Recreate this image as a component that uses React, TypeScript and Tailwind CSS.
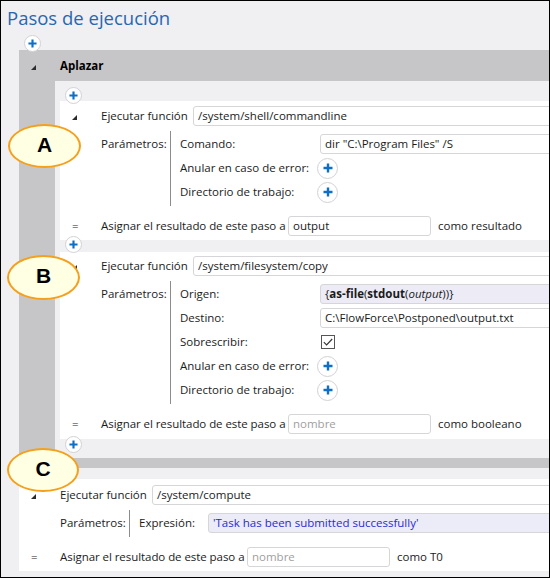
import React from 'react';

const ui = "font-['Open_Sans','Noto_Sans',sans-serif]";

function PlusButton({ big = false }: { big?: boolean }) {
  return (
    <div
      className={`${big ? 'w-[21px] h-[21px]' : 'w-[17px] h-[17px]'} rounded-full border border-[#d2d2d6] bg-white flex items-center justify-center`}
    >
      <svg width={big ? 10 : 9} height={big ? 10 : 9} viewBox="0 0 10 10">
        <path d="M5 0.5v9M0.5 5h9" stroke="#0f6fc6" strokeWidth="2.4" />
      </svg>
    </div>
  );
}

function Expander() {
  return (
    <svg width="5" height="5" viewBox="0 0 5 5">
      <path d="M5 0V5H0Z" fill="#2b2b2b" />
    </svg>
  );
}

function Field({
  children,
  className = '',
}: {
  children: React.ReactNode;
  className?: string;
}) {
  return (
    <div
      className={`h-[20px] border border-[#d6d6d8] rounded-[3px] pl-[4px] flex items-center whitespace-nowrap overflow-hidden ${className}`}
    >
      {children}
    </div>
  );
}

interface Param {
  label: string;
  kind: 'field' | 'plus' | 'check';
  value?: React.ReactNode;
  fieldClass?: string;
}

interface StepProps {
  fn: string;
  params: Param[];
  labelWidth: string;
  result: string;
  placeholder?: boolean;
  as: string;
  className?: string;
}

function Step({ fn, params, labelWidth, result, placeholder, as, className = '' }: StepProps) {
  return (
    <div className={`bg-white overflow-hidden ${className}`}>
      {/* Ejecutar función */}
      <div className="flex items-center h-[20px]">
        <div className="w-[41px] pl-[12px] pt-[3px] flex">
          <Expander />
        </div>
        <span className="w-[92px] whitespace-nowrap">Ejecutar función</span>
        <Field className="flex-1 -mr-[6px]">{fn}</Field>
      </div>

      {/* Parámetros */}
      <div className="flex ml-[41px] mt-[5px]">
        <div className="w-[69px] pt-[1px]">
          <div className="h-[24px] flex items-center">Parámetros:</div>
        </div>
        <div className="flex-1 border-l border-[#8c8c8c] pl-[9px] pt-[1px] pb-[2px]">
          {params.map((p) => (
            <div key={p.label} className="h-[24px] flex items-center">
              <span className={`${labelWidth} shrink-0 whitespace-nowrap`}>{p.label}</span>
              {p.kind === 'field' && (
                <Field className={`flex-1 -mr-[6px] ${p.fieldClass ?? ''}`}>{p.value}</Field>
              )}
              {p.kind === 'plus' && (
                <div className="-ml-[3px]">
                  <PlusButton big />
                </div>
              )}
              {p.kind === 'check' && (
                <div className="ml-[1px] w-[14px] h-[14px] border border-[#555] bg-white flex items-center justify-center">
                  <svg width="10" height="8" viewBox="0 0 10 8">
                    <path d="M0.8 4.2L3.6 7L9.2 1" stroke="#333" strokeWidth="1.1" fill="none" />
                  </svg>
                </div>
              )}
            </div>
          ))}
        </div>
      </div>

      {/* Asignar resultado */}
      <div className="flex items-center h-[20px] mt-[10px]">
        <span className="w-[41px] pl-[12px]">=</span>
        <span className="w-[187px] whitespace-nowrap tracking-[-0.06px]">
          Asignar el resultado de este paso a
        </span>
        <Field className={`w-[143px] ${placeholder ? 'text-[#a0a0a0]' : ''}`}>{result}</Field>
        <span className="ml-[7px]">{as}</span>
      </div>
    </div>
  );
}

function Oval({ letter, className }: { letter: string; className: string }) {
  return (
    <div
      className={`absolute rounded-[50%] border-[2.5px] border-[#f4a01c] bg-[#ffffe3] flex items-center justify-center font-['Liberation_Sans',Arial,sans-serif] font-bold text-[21px] text-black leading-none pb-[4px] ${className}`}
    >
      {letter}
    </div>
  );
}

export default function App() {
  return (
    <div
      className={`relative w-[550px] h-[578px] border border-black bg-[#f0f0f3] overflow-hidden text-[11.5px] text-[#1b1b1b] ${ui}`}
    >
      {/* Header */}
      <div className="relative h-[49px]">
        <div className="pl-[6px] pt-[3px] text-[18.5px] leading-[28px] text-[#2767b0]">
          Pasos de ejecución
        </div>
        <div className="absolute left-[23px] top-[34px] z-10">
          <PlusButton />
        </div>
      </div>

      {/* Aplazar */}
      <div className="ml-[18px] bg-[#c6c6c8] pb-[10px]">
        <div className="h-[31px] flex items-center">
          <div className="w-[41px] pl-[12px] pt-[3px] flex">
            <Expander />
          </div>
          <span className="font-bold text-black">Aplazar</span>
        </div>
        <div className="ml-[36px] bg-[#f0f0f3] pl-[5px]">
          <div className="relative h-[20px]">
            <div className="absolute left-[5px] top-[6px] z-10">
              <PlusButton />
            </div>
          </div>
          <Step
            className="h-[139px] pt-[5px]"
            fn="/system/shell/commandline"
            labelWidth="w-[140px]"
            params={[
              { label: 'Comando:', kind: 'field', value: 'dir "C:\\Program Files" /S' },
              { label: 'Anular en caso de error:', kind: 'plus' },
              { label: 'Directorio de trabajo:', kind: 'plus' },
            ]}
            result="output"
            as="como resultado"
          />
          <div className="relative h-[12px]">
            <div className="absolute left-[5px] -top-[4px] z-10">
              <PlusButton />
            </div>
          </div>
          <Step
            className="h-[187px] pt-[4px]"
            fn="/system/filesystem/copy"
            labelWidth="w-[140px]"
            params={[
              {
                label: 'Origen:',
                kind: 'field',
                fieldClass: 'bg-[#ecebf6]',
                value: (
                  <span>
                    {'{'}
                    <b>as-file</b>(<b>stdout</b>(<i>output</i>)){'}'}
                  </span>
                ),
              },
              { label: 'Destino:', kind: 'field', value: 'C:\\FlowForce\\Postponed\\output.txt' },
              { label: 'Sobrescribir:', kind: 'check' },
              { label: 'Anular en caso de error:', kind: 'plus' },
              { label: 'Directorio de trabajo:', kind: 'plus' },
            ]}
            result="nombre"
            placeholder
            as="como booleano"
          />
          <div className="relative h-[19px]">
            <div className="absolute left-[5px] -top-[3px] z-10">
              <PlusButton />
            </div>
          </div>
        </div>
      </div>

      {/* Paso suelto */}
      <Step
        className="ml-[18px] mt-[11px] h-[92px] pt-[6px]"
        fn="/system/compute"
        labelWidth="w-[69px]"
        params={[
          {
            label: 'Expresión:',
            kind: 'field',
            fieldClass: 'bg-[#ecebf8] text-[#2a2ad2]',
            value: "'Task has been submitted successfully'",
          },
        ]}
        result="nombre"
        placeholder
        as="como T0"
      />

      <Oval letter="A" className="left-[7px] top-[123px] w-[73px] h-[44px]" />
      <Oval letter="B" className="left-[6px] top-[254px] w-[73px] h-[45px]" />
      <Oval letter="C" className="left-[6px] top-[447px] w-[72px] h-[44px]" />
    </div>
  );
}
